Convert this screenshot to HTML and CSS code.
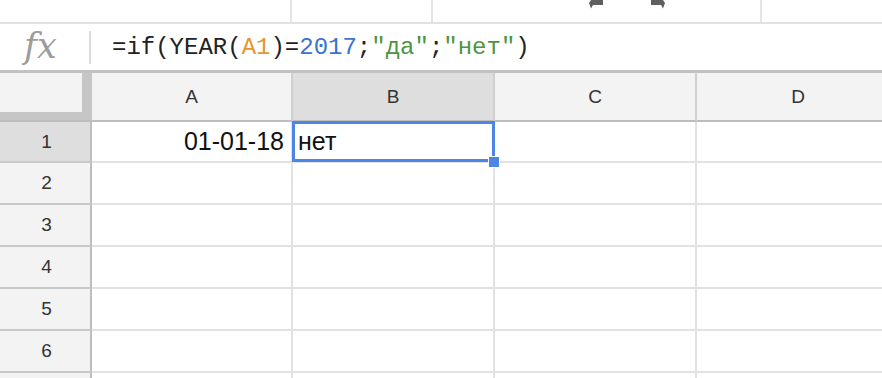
FILE: index.html
```html
<!DOCTYPE html>
<html>
<head>
<meta charset="utf-8">
<link rel="stylesheet" href="styles.css">
</head>
<body>
<div class="topbar">
  <div class="tb-seg tb-1"></div>
  <div class="tb-seg tb-2"></div>
  <div class="tb-seg tb-3">
    <svg class="arrow" width="16" height="9" viewBox="0 0 16 9"><path d="M3 0 H15 V5 H5 L3 8.5 L1 3 Z" fill="#5f5f5f"/></svg>
    <svg class="arrow" width="16" height="9" viewBox="0 0 16 9"><path d="M13 0 H1 V5 H11 L13 8.5 L15 3 Z" fill="#5f5f5f"/></svg>
  </div>
  <div class="tb-seg tb-4"></div>
</div>
<div class="formula-bar">
  <div class="fx">fx</div>
  <div class="fx-sep"></div>
  <div class="formula"><span class="k">=if(YEAR(</span><span class="ref">A1</span><span class="k">)=</span><span class="num">2017</span><span class="k">;</span><span class="str">"да"</span><span class="k">;</span><span class="str">"нет"</span><span class="k">)</span></div>
</div>
<div class="grid">
  <div class="corner"><div class="corner-inner"></div></div>
  <div class="colh">A</div>
  <div class="colh sel">B</div>
  <div class="colh">C</div>
  <div class="colh last">D</div>

  <div class="rowh sel">1</div>
  <div class="cell num-cell">01-01-18</div>
  <div class="cell active">нет<span class="handle"></span></div>
  <div class="cell"></div>
  <div class="cell last"></div>

  <div class="rowh">2</div>
  <div class="cell"></div><div class="cell"></div><div class="cell"></div><div class="cell last"></div>
  <div class="rowh">3</div>
  <div class="cell"></div><div class="cell"></div><div class="cell"></div><div class="cell last"></div>
  <div class="rowh">4</div>
  <div class="cell"></div><div class="cell"></div><div class="cell"></div><div class="cell last"></div>
  <div class="rowh">5</div>
  <div class="cell"></div><div class="cell"></div><div class="cell"></div><div class="cell last"></div>
  <div class="rowh">6</div>
  <div class="cell"></div><div class="cell"></div><div class="cell"></div><div class="cell last"></div>
  <div class="rowh"></div>
  <div class="cell"></div><div class="cell"></div><div class="cell"></div><div class="cell last"></div>
</div>
</body>
</html>
```
FILE: styles.css
```css
* { box-sizing: border-box; }
html, body {
  margin: 0;
  padding: 0;
  background: #fff;
  width: 882px;
  height: 378px;
  overflow: hidden;
  font-family: "Liberation Sans", Arial, sans-serif;
}

.topbar {
  display: flex;
  height: 24px;
  border-bottom: 2px solid #e2e2e2;
}
.tb-seg {
  height: 22px;
  border-right: 2px solid #e4e4e4;
}
.tb-1 { width: 292px; }
.tb-2 { width: 141px; }
.tb-3 {
  width: 329px;
  display: flex;
  align-items: flex-start;
  gap: 46px;
  padding-left: 155px;
}
.tb-4 { flex: 1; border-right: none; }
.arrow { display: block; }

.formula-bar {
  display: flex;
  align-items: center;
  height: 49px;
  border-bottom: 3px solid #c2c2c2;
}
.fx {
  width: 89px;
  padding-left: 24px;
  font-family: "DejaVu Serif", "Liberation Serif", serif;
  font-style: italic;
  font-size: 35px;
  color: #9c9c9c;
  line-height: 1;
  margin-top: -2px;
}
.fx-sep {
  width: 2px;
  height: 33px;
  background: #dcdcdc;
}
.formula {
  margin-left: 21px;
  font-family: "Liberation Mono", "DejaVu Sans Mono", monospace;
  font-size: 24px;
  color: #222;
  white-space: pre;
}
.ref { color: #e8962e; }
.num { color: #3a73d0; }
.str { color: #4f9440; }

.grid {
  display: grid;
  grid-template-columns: 92px 201px 202px 202px 202px;
  grid-template-rows: 49px 41px repeat(6, 42px);
  width: 899px;
}
.corner {
  background: #c6c6c6;
  border-bottom: 2px solid #bdbdbd;
}
.corner-inner {
  width: 82px;
  height: 39px;
  background: #f3f3f3;
}
.colh {
  background: #f3f3f3;
  border-right: 2px solid #d0d0d0;
  border-bottom: 2px solid #bdbdbd;
  display: flex;
  align-items: center;
  justify-content: center;
  font-size: 19px;
  color: #333;
}
.colh.sel { background: #dedede; }
.colh.last { border-right: none; }
.rowh {
  background: #f3f3f3;
  border-right: 2px solid #bdbdbd;
  border-bottom: 2px solid #c8c8c8;
  display: flex;
  align-items: center;
  justify-content: center;
  font-size: 19px;
  color: #333;
  padding-left: 3px;
}
.rowh.sel { background: #dedede; }
.cell {
  border-right: 2px solid #e2e2e2;
  border-bottom: 2px solid #e2e2e2;
  display: flex;
  align-items: center;
  font-size: 25px;
  color: #111;
  padding: 0 6px;
}
.cell.last { border-right: none; }
.num-cell { justify-content: flex-end; padding-right: 7px; }
.active {
  position: relative;
  padding-left: 5px;
}
.active::after {
  content: "";
  position: absolute;
  left: -1px;
  top: -1px;
  right: -2px;
  bottom: -1px;
  border: 3px solid #4d86e6;
}
.handle {
  position: absolute;
  right: -7px;
  bottom: -7px;
  width: 12px;
  height: 12px;
  background: #4d86e6;
  border: 1px solid #fff;
  z-index: 2;
}
```
